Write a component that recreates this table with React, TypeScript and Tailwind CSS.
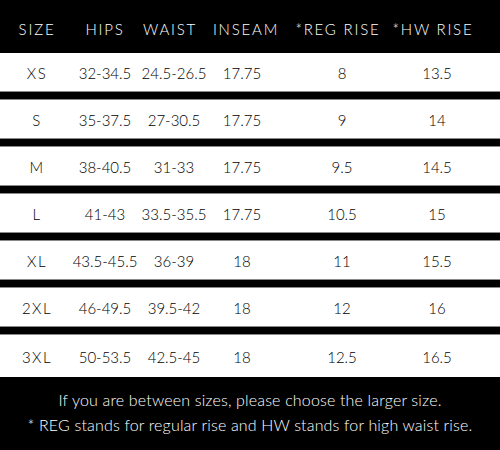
const cols = ["w-[74px]", "w-[62px]", "w-[76px]", "w-[60px]", "w-[140px]", "w-[50px]"]

const headers = [
  { label: "SIZE", cls: "" },
  { label: "HIPS", cls: "" },
  { label: "WAIST", cls: "pr-[8px]" },
  { label: "INSEAM", cls: "pl-[8px]" },
  { label: "*REG RISE", cls: "pr-[8px]" },
  { label: "*HW RISE", cls: "pr-[8px]" },
]

const rows = [
  ["XS", "32-34.5", "24.5-26.5", "17.75", "8", "13.5"],
  ["S", "35-37.5", "27-30.5", "17.75", "9", "14"],
  ["M", "38-40.5", "31-33", "17.75", "9.5", "14.5"],
  ["L", "41-43", "33.5-35.5", "17.75", "10.5", "15"],
  ["XL", "43.5-45.5", "36-39", "18", "11", "15.5"],
  ["2XL", "46-49.5", "39.5-42", "18", "12", "16"],
  ["3XL", "50-53.5", "42.5-45", "18", "12.5", "16.5"],
]

function Cell({ w, children, className = "" }: { w: string; children: React.ReactNode; className?: string }) {
  return <div className={`${w} flex justify-center whitespace-nowrap ${className}`}>{children}</div>
}

export default function App() {
  return (
    <div className="w-[500px] h-[450px] bg-white text-black font-light font-['Lato','Liberation_Sans',sans-serif] flex flex-col">
      {/* header */}
      <div className="h-[53px] shrink-0 bg-black text-white flex items-center pt-[6px] text-[15px] tracking-[0.12em]">
        {headers.map((h, i) => (
          <Cell key={h.label} w={cols[i]} className={h.cls}>
            {h.label}
          </Cell>
        ))}
      </div>

      {rows.map((r, ri) => (
        <div key={r[0]} className="flex flex-col">
          <div className={`${ri === rows.length - 1 ? "h-[42px]" : "h-[38px]"} flex items-center pt-[3px] text-[15px]`}>
            {r.map((v, i) => (
              <Cell key={i} w={cols[i]} className={i === 0 ? "tracking-[0.1em]" : ""}>
                {v}
              </Cell>
            ))}
          </div>
          {ri < rows.length - 1 && <div className="h-[9px] bg-black border-y border-[#8a8a8a]" />}
        </div>
      ))}

      {/* footer */}
      <div className="flex-1 bg-black text-white text-center text-[16px] leading-[25px] pt-[10px] tracking-[0.01em]">
        <p>If you are between sizes, please choose the larger size.</p>
        <p>* REG stands for regular rise and HW stands for high waist rise.</p>
      </div>
    </div>
  )
}
